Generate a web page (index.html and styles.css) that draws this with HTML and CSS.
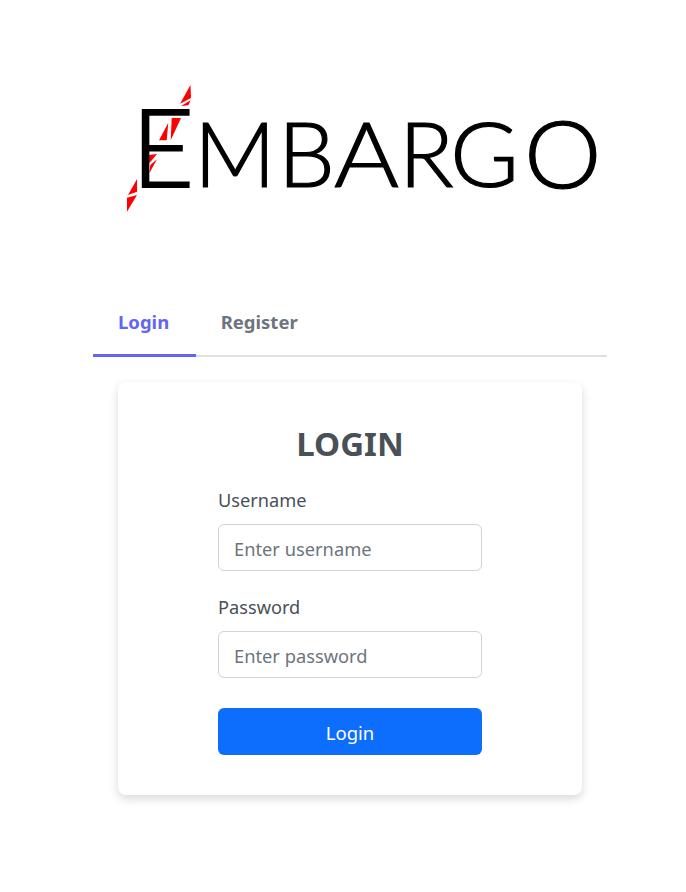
FILE: index.html
```html
<!DOCTYPE html>
<html lang="en">
<head>
<meta charset="utf-8">
<title>Embargo Login</title>
<link rel="stylesheet" href="styles.css">
</head>
<body>
<main class="page">
  <header class="logo-wrap">
    <svg class="logo" viewBox="0 0 686 290" width="686" height="290" role="img" aria-label="Embargo">
      <g class="slash">
        <polygon points="190.500,85 191,98 180,103.700"/>
        <polygon points="190.700,100.300 188.300,105.300 181,106"/>
        <polygon points="171.700,118 181,118 170.700,140.300"/>
        <polygon points="168.300,122.700 159,140.300 166.700,140.300"/>
        <polygon points="157,154 149.300,163.300 148.700,155"/>
        <polygon points="157,159.300 149.300,173.300 150.300,165"/>
        <polygon points="137,179 137,191.700 128,195"/>
        <polygon points="137,195 127,197.700 127,211.700"/>
      </g>
      <text class="logo-e" x="131.500" y="187">E</text>
      <text class="logo-rest" x="194 278" y="187">MB</text>
      <text class="logo-rest" x="334" y="187" textLength="65" lengthAdjust="spacingAndGlyphs">A</text>
      <text class="logo-rest" x="399" y="187">R</text>
      <text class="logo-rest" x="450" y="187" textLength="69" lengthAdjust="spacingAndGlyphs">G</text>
      <text class="logo-o" x="524" y="187.500" textLength="77.500" lengthAdjust="spacingAndGlyphs">O</text>
    </svg>
  </header>
  <section class="panel">
    <nav class="tabs">
      <a class="tab tab-active" href="#">Login</a>
      <a class="tab" href="#">Register</a>
    </nav>
    <form class="card">
      <h1 class="title">LOGIN</h1>
      <div class="fields">
        <div class="field">
          <label class="label" for="u">Username</label>
          <input class="input" id="u" type="text" placeholder="Enter username">
        </div>
        <div class="field">
          <label class="label" for="p">Password</label>
          <input class="input" id="p" type="password" placeholder="Enter password">
        </div>
        <button class="button" type="button">Login</button>
      </div>
    </form>
  </section>
</main>
</body>
</html>
```
FILE: styles.css
```css
* { box-sizing: border-box; }
html, body { margin: 0; background: #fff; }
body { font-family: "Noto Sans", "Open Sans", sans-serif; color: #495057; }
.page { width: 686px; height: 892px; overflow: hidden; }
.logo-wrap { height: 296px; }
.logo { display: block; }
.slash polygon { fill: #ff0000; }
.logo-e { font-family: Lato, sans-serif; font-weight: 300; font-size: 108px; fill: #000; stroke: #000; stroke-width: 2px; }
.logo-rest { font-family: Lato, sans-serif; font-weight: 300; font-size: 90px; fill: #000; stroke: #000; stroke-width: 1.2px; }
.logo-o { font-family: Lato, sans-serif; font-weight: 300; font-size: 92px; fill: #000; stroke: #000; stroke-width: 1.2px; }
.panel { width: 514px; margin: 0 0 0 93px; }
.tabs { display: flex; height: 61px; border-bottom: 2px solid #dee2e6; }
.tab { display: block; height: 61px; padding: 14px 26.5px 0 25px; font-size: 18.5px; line-height: 24px; font-weight: 700; color: #6c757d; text-decoration: none; }
.tab-active { color: #6366f1; border-bottom: 3px solid #6366f1; }
.card { width: 464px; height: 413px; margin: 25px 0 0 25px; padding: 38px 100px 0; background: #fff; border-radius: 8px; box-shadow: 0 4px 10px rgba(0,0,0,.15); }
.title { margin: 0 0 20px; font-size: 33px; line-height: 48px; font-weight: 700; text-align: center; color: #495057; }
.fields { display: flex; flex-direction: column; }
.field { margin-bottom: 24px; }
.label { display: block; margin-bottom: 12px; font-size: 18.2px; line-height: 24px; color: #495057; }
.input { display: block; width: 100%; height: 47px; padding: 2px 15px 0; border: 1px solid #ced4da; border-radius: 6px; background: #fff; font: inherit; font-size: 18.3px; color: #495057; }
.input::placeholder { color: #6c757d; opacity: 1; }
.button { height: 47px; margin-top: 6px; padding: 2px 0 0; border: 0; border-radius: 6px; background: #0d6efd; color: #fff; font: inherit; font-size: 18.5px; }
```
